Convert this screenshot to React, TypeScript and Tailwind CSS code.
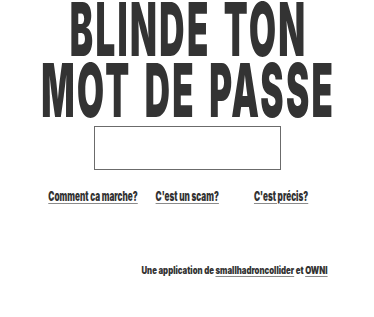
import React from "react";

const font = { fontFamily: "Inter, 'Liberation Sans', sans-serif" };

export default function App() {
  return (
    <div className="w-[374px] h-[317px] bg-white overflow-hidden text-[#333333]" style={font}>
      <div className="flex flex-col items-center">
        <div className="w-full flex justify-center h-[61px] leading-[61px] text-[74px] font-black whitespace-nowrap -mt-[1px]">
          <span className="inline-block scale-x-[0.472] origin-center tracking-[5px] [word-spacing:8px] pl-[5px]">BLINDE TON</span>
        </div>
        <div className="w-full flex justify-center h-[61px] leading-[61px] text-[74px] font-black whitespace-nowrap">
          <span className="inline-block scale-x-[0.472] origin-center tracking-[5px] [word-spacing:8px] pl-[5px]">MOT DE PASSE</span>
        </div>
        <div className="mt-[5px] w-[187px] h-[44px] border border-[#6b6b6b] bg-white" />
        <div className="mt-[18px] grid grid-cols-3 w-[282px] text-[13px] font-black leading-[16px]">
          <div className="flex justify-center whitespace-nowrap">
            <a className="inline-block scale-x-[0.63] underline decoration-[#8a8a8a] underline-offset-2">Comment ca marche?</a>
          </div>
          <div className="flex justify-center whitespace-nowrap">
            <a className="inline-block scale-x-[0.63] underline decoration-[#8a8a8a] underline-offset-2">C'est un scam?</a>
          </div>
          <div className="flex justify-center whitespace-nowrap">
            <a className="inline-block scale-x-[0.63] underline decoration-[#8a8a8a] underline-offset-2">C'est précis?</a>
          </div>
        </div>
        <div className="mt-[59px] w-[282px] flex justify-end text-[10px] font-black leading-[14px] whitespace-nowrap">
          <span className="inline-block scale-x-[0.78] origin-right">
            Une application de{" "}
            <a className="underline decoration-[#8a8a8a] underline-offset-2">smallhadroncollider</a> et{" "}
            <a className="underline decoration-[#8a8a8a] underline-offset-2">OWNI</a>
          </span>
        </div>
      </div>
    </div>
  );
}
